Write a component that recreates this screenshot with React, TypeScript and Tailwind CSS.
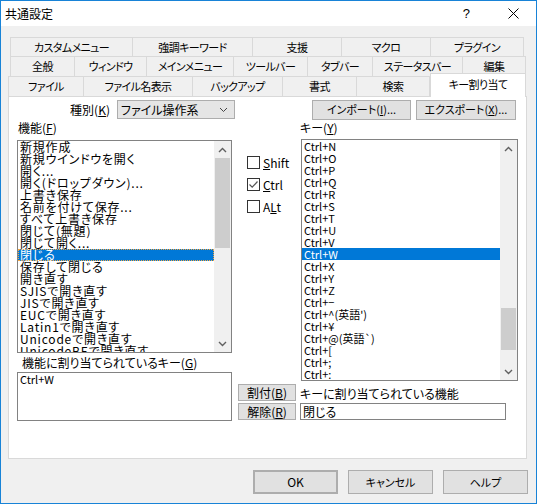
import React from "react";

const funcs = [
  "新規作成",
  "新規ウインドウを開く",
  "開く...",
  "開く(ドロップダウン)...",
  "上書き保存",
  "名前を付けて保存...",
  "すべて上書き保存",
  "閉じて(無題)",
  "閉じて開く...",
  "閉じる",
  "保存して閉じる",
  "開き直す",
  "SJISで開き直す",
  "JISで開き直す",
  "EUCで開き直す",
  "Latin1で開き直す",
  "Unicodeで開き直す",
  "UnicodeBEで開き直す",
];

const keys = [
  "Ctrl+N",
  "Ctrl+O",
  "Ctrl+P",
  "Ctrl+Q",
  "Ctrl+R",
  "Ctrl+S",
  "Ctrl+T",
  "Ctrl+U",
  "Ctrl+V",
  "Ctrl+W",
  "Ctrl+X",
  "Ctrl+Y",
  "Ctrl+Z",
  "Ctrl+−",
  "Ctrl+^(英語')",
  "Ctrl+¥",
  "Ctrl+@(英語`)",
  "Ctrl+[",
  "Ctrl+;",
  "Ctrl+:",
  "Ctrl+]",
];

const row1 = [
  ["カスタムメニュー", 122],
  ["強調キーワード", 120],
  ["支援", 89],
  ["マクロ", 89],
  ["プラグイン", 94],
] as const;
const row2 = [
  ["全般", 64],
  ["ウィンドウ", 72],
  ["メインメニュー", 87],
  ["ツールバー", 74],
  ["タブバー", 65],
  ["ステータスバー", 90],
  ["編集", 64],
] as const;
const row3 = [
  ["ファイル", 75],
  ["ファイル名表示", 109],
  ["バックアップ", 90],
  ["書式", 74],
  ["検索", 74],
] as const;

function U({ children }: { children: React.ReactNode }) {
  return <span className="underline underline-offset-1">{children}</span>;
}

function ChevUp() {
  return (
    <svg width="9" height="6" viewBox="0 0 9 6">
      <path d="M1 5 L4.5 1.5 L8 5" fill="none" stroke="#606060" strokeWidth="1.4" />
    </svg>
  );
}
function ChevDown() {
  return (
    <svg width="9" height="6" viewBox="0 0 9 6">
      <path d="M1 1 L4.5 4.5 L8 1" fill="none" stroke="#606060" strokeWidth="1.4" />
    </svg>
  );
}

function Scrollbar({ top, h }: { top: number; h: number }) {
  return (
    <div className="w-[17px] h-full bg-[#f0f0f0] flex flex-col shrink-0">
      <div className="h-[17px] flex items-center justify-center">
        <ChevUp />
      </div>
      <div className="flex-1 relative">
        <div className="absolute left-[1px] right-[1px] bg-[#cdcdcd]" style={{ top, height: h }} />
      </div>
      <div className="h-[17px] flex items-center justify-center">
        <ChevDown />
      </div>
    </div>
  );
}

function TabRow({ tabs }: { tabs: readonly (readonly [string, number])[] }) {
  return (
    <>
      {tabs.map(([t, w], i) => (
        <div
          key={t}
          className={`h-full flex items-center justify-center border-l border-t border-[#d9d9d9] bg-[#f0f0f0] ${
            i === tabs.length - 1 ? "border-r" : ""
          }`}
          style={{ width: w }}
        >
          {t}
        </div>
      ))}
    </>
  );
}

function Check({ label, checked }: { label: React.ReactNode; checked?: boolean }) {
  return (
    <div className="h-[13px] flex items-center gap-[3px]">
      <div className="w-[13px] h-[13px] border border-[#333333] bg-white flex items-center justify-center">
        {checked && (
          <svg width="11" height="11" viewBox="0 0 11 11">
            <path d="M1.5 5.5 L4.2 8.2 L9.5 2.5" fill="none" stroke="#555" strokeWidth="1.2" />
          </svg>
        )}
      </div>
      <span className="leading-[13px]">{label}</span>
    </div>
  );
}

function Btn({ children, w, h, cls = "" }: { children: React.ReactNode; w: number; h: number; cls?: string }) {
  return (
    <div
      className={`bg-[#e1e1e1] border border-[#adadad] flex items-center justify-center ${cls}`}
      style={{ width: w, height: h }}
    >
      {children}
    </div>
  );
}

export default function App() {
  return (
    <div className="w-[537px] h-[504px] border border-[#1883d7] bg-[#f0f0f0] flex flex-col text-[12px] text-black font-['Noto_Sans_CJK_JP',sans-serif] [font-feature-settings:'palt'] overflow-hidden">
      {/* title bar */}
      <div className="h-[25px] bg-white flex items-center shrink-0">
        <span className="ml-[4px] text-[12px]">共通設定</span>
        <div className="flex-1" />
        <span className="text-[13px] mr-[38px] font-['Liberation_Sans',sans-serif]">?</span>
        <svg width="11" height="11" viewBox="0 0 11 11" className="mr-[17px]">
          <path d="M0.5 0.5 L10.5 10.5 M10.5 0.5 L0.5 10.5" stroke="#000" strokeWidth="1" />
        </svg>
      </div>

      {/* tabs */}
      <div className="mt-[11px] flex flex-col shrink-0 text-[11px] tracking-[-0.6px]">
        <div className="ml-[9px] h-[19px] flex">
          <TabRow tabs={row1} />
        </div>
        <div className="ml-[9px] h-[20px] flex">
          <TabRow tabs={row2} />
        </div>
        <div className="ml-[7px] h-[20px] flex items-end">
          <TabRow tabs={row3} />
          <div className="w-[96px] h-[24px] -mb-[1px] relative z-10 bg-white border-l border-t border-r border-[#d9d9d9] flex items-center justify-center pb-[2px]">
            キー割り当て
          </div>
        </div>
      </div>

      {/* panel */}
      <div className="ml-[7px] w-[519px] h-[363px] border border-[#d9d9d9] bg-white flex flex-col shrink-0">
        {/* top row */}
        <div className="mt-[2px] h-[21px] flex items-center">
          <div className="w-[101px] text-right">
            種別(<U>K</U>)
          </div>
          <div className="ml-[7px] w-[118px] h-[19px] bg-[#e5e5e5] border border-[#adadad] flex items-center pl-[3px]">
            <span className="flex-1">ファイル操作系</span>
            <svg width="9" height="6" viewBox="0 0 9 6" className="mr-[6px]">
              <path d="M1 1 L4.5 4.5 L8 1" fill="none" stroke="#444" strokeWidth="1" />
            </svg>
          </div>
          <Btn w={99} h={20} cls="ml-[77px] text-[11px]">
            インポート(<U>I</U>)...
          </Btn>
          <Btn w={100} h={20} cls="ml-[5px] text-[11px]">
            エクスポート(<U>X</U>)...
          </Btn>
        </div>

        {/* main */}
        <div className="flex h-[301px]">
          {/* left column */}
          <div className="ml-[8px] w-[215px] flex flex-col">
            <div className="h-[20px] pt-[1px] leading-[14px] pl-[1px]">
              機能(<U>F</U>)
            </div>
            <div className="h-[213px] border border-[#828282] flex overflow-hidden">
              <div className="flex-1 flex flex-col overflow-hidden text-[12px] tracking-[0.8px]">
                {funcs.map((f) => (
                  <div
                    key={f}
                    className={`h-[12px] leading-[12px] shrink-0 whitespace-nowrap pl-[2px] ${
                      f === "閉じる" ? "bg-[#0078d7] text-white outline outline-1 outline-dotted outline-[#f5a742] -outline-offset-1" : ""
                    }`}
                  >
                    {f}
                  </div>
                ))}
              </div>
              <Scrollbar top={0} h={90} />
            </div>
            <div className="h-[19px] pl-[5px] flex items-center leading-[14px]">
              機能に割り当てられているキー(<U>G</U>)
            </div>
            <div className="h-[49px] border border-[#828282] pl-[2px] leading-[13px] text-[11px]">
              Ctrl+W
            </div>
          </div>

          {/* middle column */}
          <div className="ml-[6px] w-[58px] flex flex-col">
            <div className="mt-[36px] pl-[9px] flex flex-col gap-[9px]">
              <Check label={<><U>S</U>hift</>} />
              <Check label={<><U>C</U>trl</>} checked />
              <Check label={<>A<U>L</U>t</>} />
            </div>
            <div className="mt-auto mb-[1px] flex flex-col gap-[2px]">
              <Btn w={58} h={17}>
                割付(<U>B</U>)
              </Btn>
              <Btn w={58} h={17}>
                解除(<U>R</U>)
              </Btn>
            </div>
          </div>

          {/* right column */}
          <div className="ml-[4px] w-[218px] flex flex-col">
            <div className="h-[19px] pt-[1px] leading-[14px]">
              キー(<U>Y</U>)
            </div>
            <div className="ml-[1px] h-[242px] border border-[#828282] flex overflow-hidden">
              <div className="flex-1 flex flex-col overflow-hidden text-[11px] [font-feature-settings:normal]">
                {keys.map((k) => (
                  <div
                    key={k}
                    className={`h-[12px] leading-[12px] shrink-0 whitespace-nowrap pl-[2px] ${
                      k === "Ctrl+W" ? "bg-[#0078d7] text-white" : ""
                    }`}
                  >
                    {k}
                  </div>
                ))}
              </div>
              <Scrollbar top={151} h={42} />
            </div>
            <div className="h-[22px] flex items-end pb-[2px] leading-[14px]">
              キーに割り当てられている機能
            </div>
            <div className="w-[206px] h-[17px] border border-[#828282] pl-[2px] leading-[15px]">
              閉じる
            </div>
          </div>
        </div>
      </div>

      {/* bottom buttons */}
      <div className="mt-[11px] flex justify-end gap-[10px] pr-[8px] text-[11px]">
        <Btn w={85} h={24} cls="border-2 border-[#0078d7] text-[12px]">
          OK
        </Btn>
        <Btn w={85} h={24}>
          キャンセル
        </Btn>
        <Btn w={85} h={24}>
          ヘルプ
        </Btn>
      </div>
    </div>
  );
}
